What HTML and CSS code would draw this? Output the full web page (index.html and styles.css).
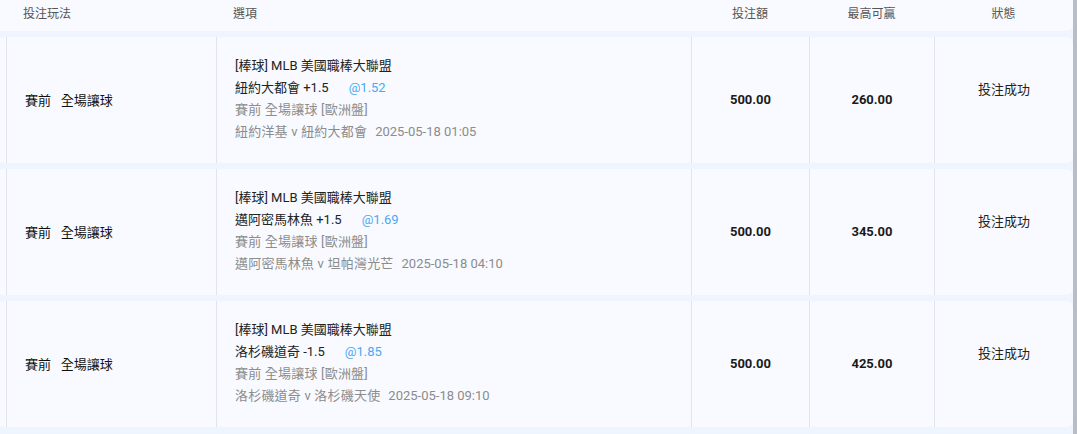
FILE: index.html
```html
<!DOCTYPE html>
<html lang="zh-Hant">
<head>
<meta charset="utf-8">
<link rel="stylesheet" href="styles.css">
</head>
<body>
<div class="page">
  <div class="table">
    <div class="head">
      <div class="h h1">投注玩法</div>
      <div class="h h2">選項</div>
      <div class="h hc">投注額</div>
      <div class="h hc">最高可贏</div>
      <div class="h hc">狀態</div>
    </div>

    <div class="row">
      <div class="c c1">賽前&nbsp;&nbsp;&nbsp;全場讓球</div>
      <div class="c c2">
        <div class="ln dark">[棒球] MLB 美國職棒大聯盟</div>
        <div class="ln dark">紐約大都會 +1.5<span class="odds">@1.52</span></div>
        <div class="ln grey">賽前 全場讓球 [歐洲盤]</div>
        <div class="ln grey">紐約洋基 v 紐約大都會<span class="date">2025-05-18 01:05</span></div>
      </div>
      <div class="c num">500.00</div>
      <div class="c num">260.00</div>
      <div class="c status">投注成功</div>
    </div>

    <div class="row">
      <div class="c c1">賽前&nbsp;&nbsp;&nbsp;全場讓球</div>
      <div class="c c2">
        <div class="ln dark">[棒球] MLB 美國職棒大聯盟</div>
        <div class="ln dark">邁阿密馬林魚 +1.5<span class="odds">@1.69</span></div>
        <div class="ln grey">賽前 全場讓球 [歐洲盤]</div>
        <div class="ln grey">邁阿密馬林魚 v 坦帕灣光芒<span class="date">2025-05-18 04:10</span></div>
      </div>
      <div class="c num">500.00</div>
      <div class="c num">345.00</div>
      <div class="c status">投注成功</div>
    </div>

    <div class="row">
      <div class="c c1">賽前&nbsp;&nbsp;&nbsp;全場讓球</div>
      <div class="c c2">
        <div class="ln dark">[棒球] MLB 美國職棒大聯盟</div>
        <div class="ln dark">洛杉磯道奇 -1.5<span class="odds">@1.85</span></div>
        <div class="ln grey">賽前 全場讓球 [歐洲盤]</div>
        <div class="ln grey">洛杉磯道奇 v 洛杉磯天使<span class="date">2025-05-18 09:10</span></div>
      </div>
      <div class="c num">500.00</div>
      <div class="c num">425.00</div>
      <div class="c status">投注成功</div>
    </div>
  </div>
  <div class="scrollbar"></div>
</div>
</body>
</html>
```

FILE: styles.css
```css
html, body {
  margin: 0;
  padding: 0;
}
body {
  background: #eef5fe;
  font-family: "Roboto", "Noto Sans CJK TC", sans-serif;
  font-size: 13px;
  color: #222;
  overflow: hidden;
}
.page {
  display: flex;
  width: 1077px;
  height: 434px;
}
.table {
  flex: 0 0 1073px;
  display: flex;
  flex-direction: column;
  gap: 6px;
}
.scrollbar {
  flex: 0 0 4px;
  background: #b9bdc5;
}
.head,
.row {
  display: grid;
  grid-template-columns: 6px 210px 475px 118px 125px 139px;
  background: #f8faff;
  border-radius: 0 7px 7px 0;
}
.head {
  height: 31px;
  border-radius: 0 0 7px 0;
}
.head::before,
.row::before {
  content: "";
}
.h {
  font-size: 12px;
  color: #555;
  line-height: 29px;
}
.h1 { padding-left: 17px; }
.h2 { padding-left: 17px; }
.hc { text-align: center; }

.row {
  height: 126px;
}
.c {
  border-left: 1px solid #dfe4ee;
  display: flex;
  flex-direction: column;
  justify-content: center;
  padding-bottom: 2px;
}
.c1 {
  padding-left: 18px;
  color: #111;
}
.c2 {
  padding-left: 18px;
}
.ln {
  line-height: 22px;
  white-space: nowrap;
}
.dark { color: #222; }
.grey { color: #8c8c8c; letter-spacing: 0.2px; }
.odds {
  color: #4aa9f3;
  margin-left: 20px;
  letter-spacing: 0;
}
.date {
  margin-left: 8px;
  letter-spacing: 0;
}
.num {
  align-items: center;
  font-weight: 700;
  color: #1a1a1a;
}
.status {
  align-items: center;
  padding-bottom: 24px;
  color: #222;
}
```
